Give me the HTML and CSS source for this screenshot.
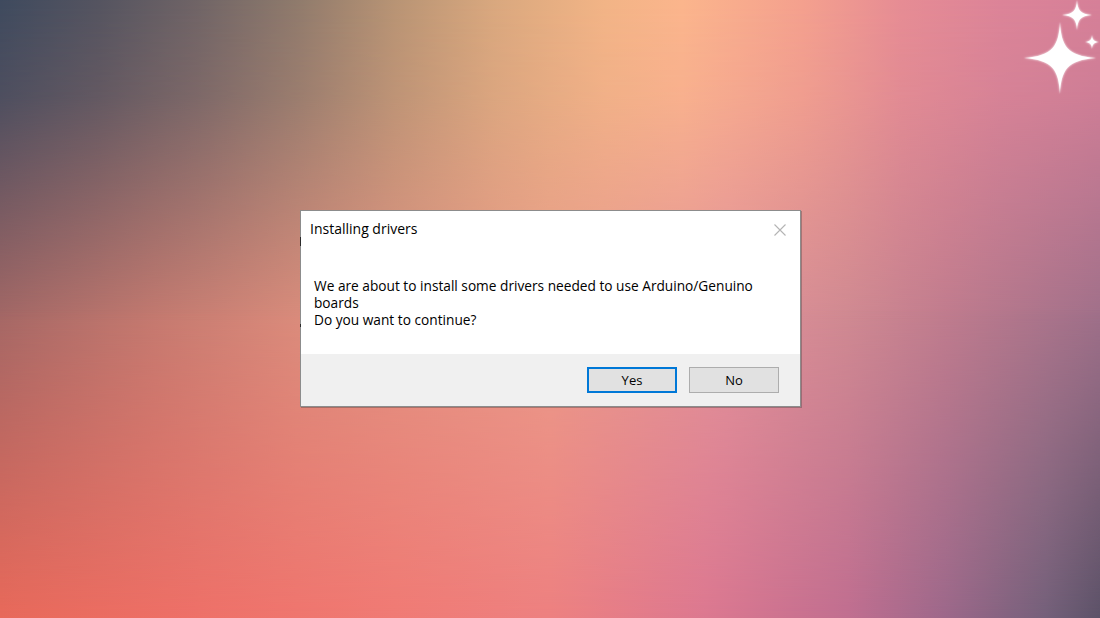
FILE: index.html
```html
<!DOCTYPE html>
<html lang="en">
<head>
<meta charset="utf-8">
<title>Installing drivers</title>
<link rel="stylesheet" href="styles.css">
</head>
<body>
<div class="desktop">
  <svg class="sparkles" width="90" height="100" viewBox="0 0 90 100" aria-hidden="true">
    <defs>
      <filter id="glow" x="-50%" y="-50%" width="200%" height="200%">
        <feGaussianBlur stdDeviation="1.2" result="b"/>
        <feMerge><feMergeNode in="b"/><feMergeNode in="SourceGraphic"/></feMerge>
      </filter>
    </defs>
    <g fill="#ffffff" filter="url(#glow)">
      <path transform="translate(50 58)" d="M0,-36 C1.3,-12 7,-2.2 36,0 C7,2.2 1.3,12 0,36 C-1.3,12 -7,2.2 -36,0 C-7,-2.2 -1.3,-12 0,-36Z"/>
      <path transform="translate(67 15)" d="M0,-15 C0.7,-5 3,-0.9 15,0 C3,0.9 0.7,5 0,15 C-0.7,5 -3,0.9 -15,0 C-3,-0.9 -0.7,-5 0,-15Z"/>
      <path transform="translate(82 42)" d="M0,-7 C0.4,-2.5 1.6,-0.5 7,0 C1.6,0.5 0.4,2.5 0,7 C-0.4,2.5 -1.6,0.5 -7,0 C-1.6,-0.5 -0.4,-2.5 0,-7Z"/>
    </g>
  </svg>
  <div class="dialog">
    <div class="titlebar">
      <span class="title">Installing drivers</span>
      <svg class="close" width="14" height="14" viewBox="0 0 14 14" aria-hidden="true">
        <path d="M1.5 1.5 L12.5 12.5 M12.5 1.5 L1.5 12.5" stroke="#b4b4b4" stroke-width="1.1" fill="none"/>
      </svg>
    </div>
    <div class="content">
      <p class="message">We are about to install some drivers needed to use Arduino/Genuino<br>boards<br>Do you want to continue?</p>
    </div>
    <div class="footer">
      <button class="btn btn-default">Yes</button>
      <button class="btn">No</button>
    </div>
  </div>
</div>
</body>
</html>
```
FILE: styles.css
```css
html, body {
  margin: 0;
  padding: 0;
}
body {
  width: 1100px;
  height: 618px;
  overflow: hidden;
  font-family: "Open Sans", "Noto Sans", "Liberation Sans", sans-serif;
}
.desktop {
  position: relative;
  width: 1100px;
  height: 618px;
  box-sizing: border-box;
  padding: 210px 0 0 300px;
  background: linear-gradient(to right,
    #a46866 0%, #c47a70 14%, #da8c7c 27%, #eb9c8a 50%,
    #e2929a 66%, #d08a92 77%, #c07c8e 86%, #a0708a 100%);
}
.desktop::before,
.desktop::after {
  content: "";
  position: absolute;
  left: 0;
  width: 100%;
  pointer-events: none;
}
.desktop::before {
  top: 0;
  height: 52%;
  background: linear-gradient(to right,
    #3e4a5e 0%, #545460 9%, #6f6466 18%, #8f7a6c 27%, #b89474 36%,
    #d9a87e 45%, #f2b486 55%, #fbb58c 62%, #f4a08e 73%, #e68c94 82%,
    #dc8498 91%, #d68098 100%);
  -webkit-mask-image: linear-gradient(to bottom, #000 0%, rgba(0,0,0,0.85) 30%, rgba(0,0,0,0) 100%);
  mask-image: linear-gradient(to bottom, #000 0%, rgba(0,0,0,0.85) 30%, rgba(0,0,0,0) 100%);
}
.desktop::after {
  bottom: 0;
  height: 50%;
  background: linear-gradient(to right,
    #e8695a 0%, #ee7068 18%, #f07a74 36%, #ed8080 50%, #dc7890 64%,
    #c06e90 77%, #9c688a 86%, #74607a 95%, #5c5268 100%);
  -webkit-mask-image: linear-gradient(to top, #000 0%, rgba(0,0,0,0) 100%);
  mask-image: linear-gradient(to top, #000 0%, rgba(0,0,0,0) 100%);
}
.sparkles {
  position: absolute;
  top: 0;
  right: 0;
  z-index: 2;
}
.dialog {
  position: relative;
  z-index: 1;
  width: 499px;
  border: 1px solid #8c8c8c;
  background: #ffffff;
  box-shadow: 1px 1px 0 rgba(60,60,60,0.35);
}
.dialog::before,
.dialog::after {
  content: "";
  position: absolute;
  left: -1px;
  width: 1px;
  background: #2a2a2a;
}
.dialog::before { top: 26px; height: 9px; }
.dialog::after { top: 113px; height: 3px; }
.titlebar {
  height: 36px;
  display: flex;
  align-items: center;
  justify-content: space-between;
  padding: 0 13px 0 9px;
}
.title {
  font-size: 14px;
  color: #000;
  line-height: 38px;
}
.close {
  display: block;
  margin-top: 1px;
}
.content {
  height: 107px;
  box-sizing: border-box;
  padding: 30px 0 0 13px;
}
.message {
  margin: 0;
  font-size: 13.7px;
  line-height: 17px;
  color: #000;
}
.footer {
  height: 52px;
  box-sizing: border-box;
  background: #f0f0f0;
  display: flex;
  justify-content: flex-end;
  align-items: flex-start;
  gap: 12px;
  padding: 13px 21px 0 0;
}
.btn {
  width: 90px;
  height: 26px;
  margin: 0;
  padding: 0;
  box-sizing: border-box;
  border: 1px solid #adadad;
  background: #e1e1e1;
  font-family: inherit;
  font-size: 13px;
  color: #000;
  line-height: 23px;
}
.btn-default {
  border: 2px solid #0078d7;
}
```
